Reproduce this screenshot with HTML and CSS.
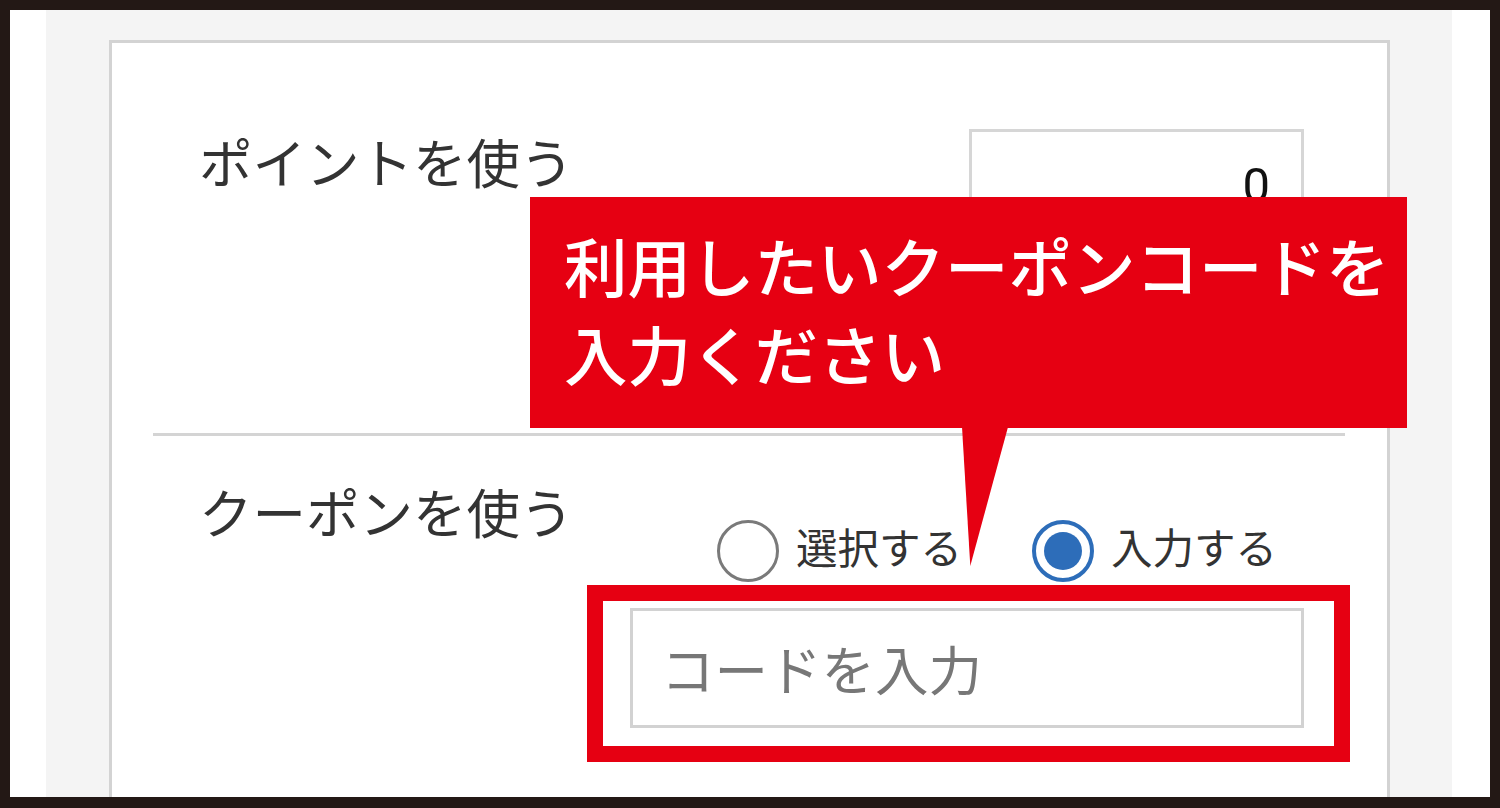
FILE: index.html
```html
<!DOCTYPE html>
<html lang="ja">
    <head>
        <meta charset="UTF-8" />
        <meta name="viewport" content="width=device-width, initial-scale=1.0" />
        <title>クーポン入力</title>
        <link rel="stylesheet" href="styles.css">
    </head>
    <body>
        <div class="frame">
            <div class="panel">
                <div class="card">
                    <div class="row row-points">
                        <p class="label">ポイントを使う</p>
                        <div class="point-box">0</div>
                    </div>
                    <div class="divider"></div>
                    <div class="row row-coupon">
                        <p class="label">クーポンを使う</p>
                        <div class="coupon-controls">
                            <div class="radio-group">
                                <label class="radio">
                                    <span class="radio-mark"></span>
                                    <span class="radio-text">選択する</span>
                                </label>
                                <label class="radio checked">
                                    <span class="radio-mark"></span>
                                    <span class="radio-text">入力する</span>
                                </label>
                            </div>
                            <div class="code-input">コードを入力</div>
                        </div>
                    </div>
                </div>
            </div>

            <!-- annotation overlays -->
            <div class="callout">
                <p>利用したいクーポンコードを<br>入力ください</p>
            </div>
            <div class="highlight"></div>
        </div>
    </body>
</html>
```

FILE: styles.css
```css
body {
    margin: 0;
    font-family: "Noto Sans CJK JP", "Noto Sans", sans-serif;
    background-color: #231815;
    overflow: hidden;
}
p {
    margin: 0;
}
.frame {
    position: relative;
    box-sizing: border-box;
    width: 1500px;
    height: 808px;
    border: 10px solid #231815;
    border-bottom-width: 11px;
    background-color: #fff;
    padding: 0 38px 0 36px;
}
.panel {
    height: 100%;
    box-sizing: border-box;
    background-color: #f4f4f4;
    padding: 30px 62px 0 63px;
}
.card {
    height: 100%;
    box-sizing: border-box;
    background-color: #fff;
    border: 3px solid #d3d3d3;
    border-bottom: none;
}
.row {
    display: flex;
    justify-content: space-between;
    padding: 0 83px 0 87px;
}
.label {
    font-size: 53.5px;
    line-height: 1;
    color: #333;
}
.row-points {
    height: 390px;
    box-sizing: border-box;
    padding-top: 86px;
}
.row-points .label {
    margin-top: 5px;
}
.point-box {
    box-sizing: border-box;
    width: 335px;
    height: 120px;
    border: 3px solid #d6d6d6;
    padding: 29px 31px 0 0;
    text-align: right;
    font-family: Roboto, "Liberation Sans", sans-serif;
    font-size: 49px;
    line-height: 1;
    color: #111;
}
.divider {
    height: 3px;
    margin: 0 42px 0 41px;
    background-color: #d4d4d4;
}
.row-coupon .label {
    margin-top: 48px;
}
.coupon-controls {
    width: 674px;
    padding-top: 84px;
}
.radio-group {
    display: flex;
    gap: 70px;
    padding-left: 87px;
}
.radio {
    display: flex;
    align-items: center;
    gap: 17px;
}
.radio-mark {
    box-sizing: border-box;
    width: 62px;
    height: 62px;
    border: 3px solid #7a7a7a;
    border-radius: 50%;
    display: flex;
    align-items: center;
    justify-content: center;
}
.radio.checked .radio-mark {
    border: 4px solid #2d6db9;
}
.radio.checked .radio-mark::after {
    content: "";
    width: 38px;
    height: 38px;
    border-radius: 50%;
    background-color: #2d6db9;
}
.radio-text {
    font-size: 41.5px;
    line-height: 1;
    color: #333;
    margin-top: -8px;
}
.code-input {
    box-sizing: border-box;
    margin-top: 26px;
    height: 120px;
    border: 3px solid #d2d2d2;
    padding: 30px 0 0 28px;
    font-size: 53.5px;
    line-height: 1;
    color: #777;
}
.callout {
    position: absolute;
    left: 520px;
    top: 187px;
    width: 877px;
    height: 231px;
    box-sizing: border-box;
    background-color: #e60012;
    padding: 23px 0 0 34px;
}
.callout::after {
    content: "";
    position: absolute;
    left: 432px;
    top: 230px;
    width: 46px;
    height: 139px;
    background-color: #e60012;
    clip-path: polygon(0 0, 100% 0, 18% 100%);
}
.callout p {
    font-size: 63.5px;
    line-height: 88px;
    font-weight: 500;
    color: #fff;
}
.highlight {
    position: absolute;
    left: 577px;
    top: 575px;
    width: 763px;
    height: 177px;
    box-sizing: border-box;
    border: 16px solid #e60012;
}
```
